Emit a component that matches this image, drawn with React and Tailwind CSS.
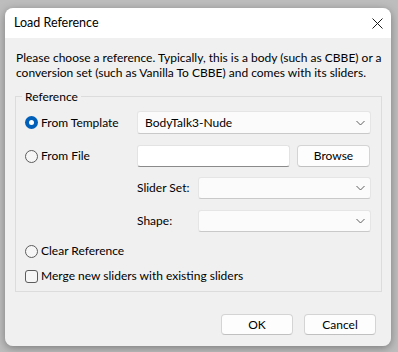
import React from "react";

const font = { fontFamily: "Lato, 'Noto Sans', sans-serif" };

function Chevron() {
  return (
    <svg width="9" height="5" viewBox="0 0 9 5" className="absolute right-[5px] top-1/2 -translate-y-1/2">
      <path d="M0.5 0.5 L4.5 4.5 L8.5 0.5" fill="none" stroke="#5f5f5f" strokeWidth="1" />
    </svg>
  );
}

function Combo({ value, className }) {
  return (
    <div className={"relative flex items-center bg-[#fbfbfb] border border-[#e5e5e5] border-b-[#c9c9c9] rounded-[3px] pl-[7px] text-[12px] text-black " + className}>
      {value}
      <Chevron />
    </div>
  );
}

function Radio({ checked }) {
  if (checked) {
    return (
      <div className="w-[13px] h-[13px] rounded-full bg-[#005fb8] flex items-center justify-center">
        <div className="w-[5px] h-[5px] rounded-full bg-white" />
      </div>
    );
  }
  return <div className="w-[13px] h-[13px] rounded-full border border-[#5c5c5c] bg-[#f6f6f6]" />;
}

function Btn({ children, className }) {
  return (
    <div className={"flex items-center justify-center bg-[#fdfdfd] border border-[#d4d4d4] border-b-[#c0c0c0] rounded-[4px] text-[12px] text-black " + className}>
      {children}
    </div>
  );
}

export default function App() {
  return (
    <div className="w-[398px] h-[352px] bg-[#bdbdbd] pt-[8px] pl-[5px]" style={font}>
      <div className="w-[386px] h-[338px] rounded-[8px] overflow-hidden flex flex-col shadow-[0_2px_8px_rgba(0,0,0,0.35)]">
        <div className="h-[30px] bg-white flex items-center justify-between pl-[9px] pr-[8px] shrink-0">
          <span className="text-[12.5px] text-black">Load Reference</span>
          <svg width="11" height="11" viewBox="0 0 11 11">
            <path d="M0.5 0.5 L10.5 10.5 M10.5 0.5 L0.5 10.5" stroke="#1a1a1a" strokeWidth="1" />
          </svg>
        </div>
        <div className="flex-1 bg-[#f0f0f0] flex flex-col">
          <div className="mt-[12px] ml-[11px] text-[12px] leading-[15px] text-black">
            <div>Please choose a reference. Typically, this is a body (such as CBBE) or a</div>
            <div>conversion set (such as Vanilla To CBBE) and comes with its sliders.</div>
          </div>
          <div className="relative mt-[16px] ml-[10px] w-[367px] h-[196px] border border-[#dcdcdc] flex flex-col">
            <span className="absolute -top-[8px] left-[6px] px-[3px] bg-[#f0f0f0] text-[12px] leading-[15px] text-black">Reference</span>
            <div className="mt-[14px] h-[23px] flex items-center">
              <div className="ml-[9px] w-[13px]"><Radio checked /></div>
              <span className="ml-[3px] w-[96px] text-[12px] text-black">From Template</span>
              <Combo value="BodyTalk3-Nude" className="w-[234px] h-[23px]" />
            </div>
            <div className="mt-[11px] h-[22px] flex items-center">
              <div className="ml-[9px] w-[13px]"><Radio /></div>
              <span className="ml-[3px] w-[96px] text-[12px] text-black">From File</span>
              <div className="w-[153px] h-[22px] bg-white border border-[#e3e3e3] border-b-[#8a8a8a] rounded-[3px]" />
              <Btn className="ml-[7px] w-[73px] h-[22px]">Browse</Btn>
            </div>
            <div className="mt-[10px] h-[22px] flex items-center">
              <span className="ml-[121px] w-[61px] text-[12px] text-black">Slider Set:</span>
              <Combo value="" className="w-[173px] h-[22px]" />
            </div>
            <div className="mt-[11px] h-[22px] flex items-center">
              <span className="ml-[121px] w-[61px] text-[12px] text-black">Shape:</span>
              <Combo value="" className="w-[173px] h-[22px]" />
            </div>
            <div className="mt-[11px] h-[16px] flex items-center">
              <div className="ml-[9px] w-[13px]"><Radio /></div>
              <span className="ml-[3px] text-[12px] text-black">Clear Reference</span>
            </div>
            <div className="mt-[9px] h-[16px] flex items-center">
              <div className="ml-[9px] w-[13px] h-[13px] rounded-[3px] border border-[#5c5c5c] bg-[#f6f6f6]" />
              <span className="ml-[3px] text-[12px] text-black">Merge new sliders with existing sliders</span>
            </div>
          </div>
          <div className="mt-[22px] flex justify-end pr-[15px] gap-[11px]">
            <Btn className="w-[72px] h-[21px]">OK</Btn>
            <Btn className="w-[72px] h-[21px]">Cancel</Btn>
          </div>
        </div>
      </div>
    </div>
  );
}
